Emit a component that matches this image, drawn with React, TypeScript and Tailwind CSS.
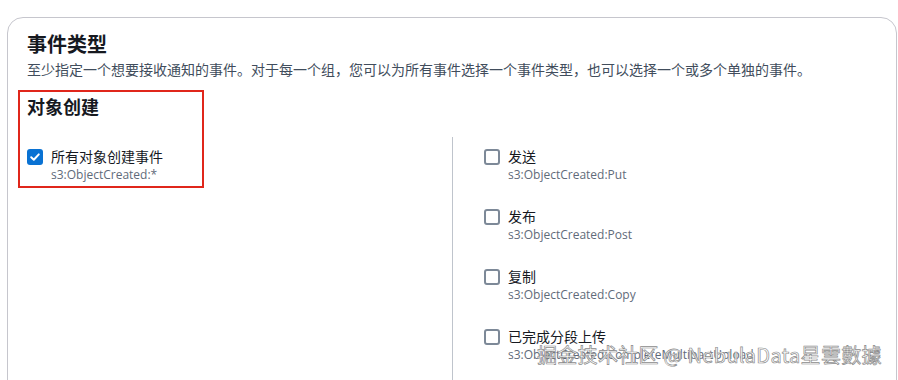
const events = [
  { label: '发送', code: 's3:ObjectCreated:Put' },
  { label: '发布', code: 's3:ObjectCreated:Post' },
  { label: '复制', code: 's3:ObjectCreated:Copy' },
  { label: '已完成分段上传', code: 's3:ObjectCreated:CompleteMultipartUpload' },
]

const Box = ({ checked }: { checked?: boolean }) =>
  checked ? (
    <span className="mt-[2px] flex h-4 w-4 shrink-0 items-center justify-center rounded-[3px] bg-[#0972d3]">
      <svg width="12" height="12" viewBox="0 0 12 12" fill="none">
        <path d="M2.2 6.2 4.8 8.7 9.8 3.4" stroke="white" strokeWidth="2" strokeLinecap="round" strokeLinejoin="round" />
      </svg>
    </span>
  ) : (
    <span className="mt-[2px] h-4 w-4 shrink-0 rounded-[3px] border-2 border-[#7d8998] bg-white" />
  )

const Option = ({ label, code, checked }: { label: string; code: string; checked?: boolean }) => (
  <div className="flex gap-[8px]">
    <Box checked={checked} />
    <div className="flex flex-col">
      <span className="text-[14px] leading-[20px] text-[#16191f]">{label}</span>
      <span className="text-[12px] leading-[16px] text-[#5f6b7a]">{code}</span>
    </div>
  </div>
)

export default function App() {
  return (
    <div className="relative h-[380px] w-[898px] overflow-hidden bg-white font-['Open_Sans','Noto_Sans_CJK_SC',sans-serif]">
      <div className="ml-[7px] mt-[17px] h-[420px] w-[890px] rounded-[16px] border border-[#c6c6cd] pl-[19px] pt-[13px]">
        <h2 className="text-[20px] font-bold leading-[28px] text-[#16191f]">事件类型</h2>
        <p className="mt-[1px] text-[14px] leading-[20px] text-[#414d5c]">
          至少指定一个想要接收通知的事件。对于每一个组，您可以为所有事件选择一个事件类型，也可以选择一个或多个单独的事件。
        </p>
        <h3 className="mt-[14px] text-[18px] font-bold leading-[26px] text-[#16191f]">对象创建</h3>
        <div className="mt-[17px] grid grid-cols-[425px_1fr]">
          <div className="pt-[10px]">
            <Option label="所有对象创建事件" code="s3:ObjectCreated:*" checked />
          </div>
          <div className="flex h-[260px] flex-col gap-[24px] border-l border-[#bfc4cc] pl-[31px] pt-[10px]">
            {events.map((e) => (
              <Option key={e.code} label={e.label} code={e.code} />
            ))}
          </div>
        </div>
      </div>

      {/* annotation box */}
      <div className="absolute left-[18px] top-[90px] h-[98px] w-[186px] border-2 border-[#e0261b]" />

      {/* watermark */}
      <div className="absolute left-[537px] top-[341px] whitespace-nowrap font-['Noto_Sans_CJK_SC',sans-serif] text-[20px] leading-[28px] tracking-[0.3px] text-white/95 [-webkit-text-stroke:0.7px_#8c8c8c]">
        掘金技术社区 @ NebulaData星雲數據
      </div>
    </div>
  )
}
